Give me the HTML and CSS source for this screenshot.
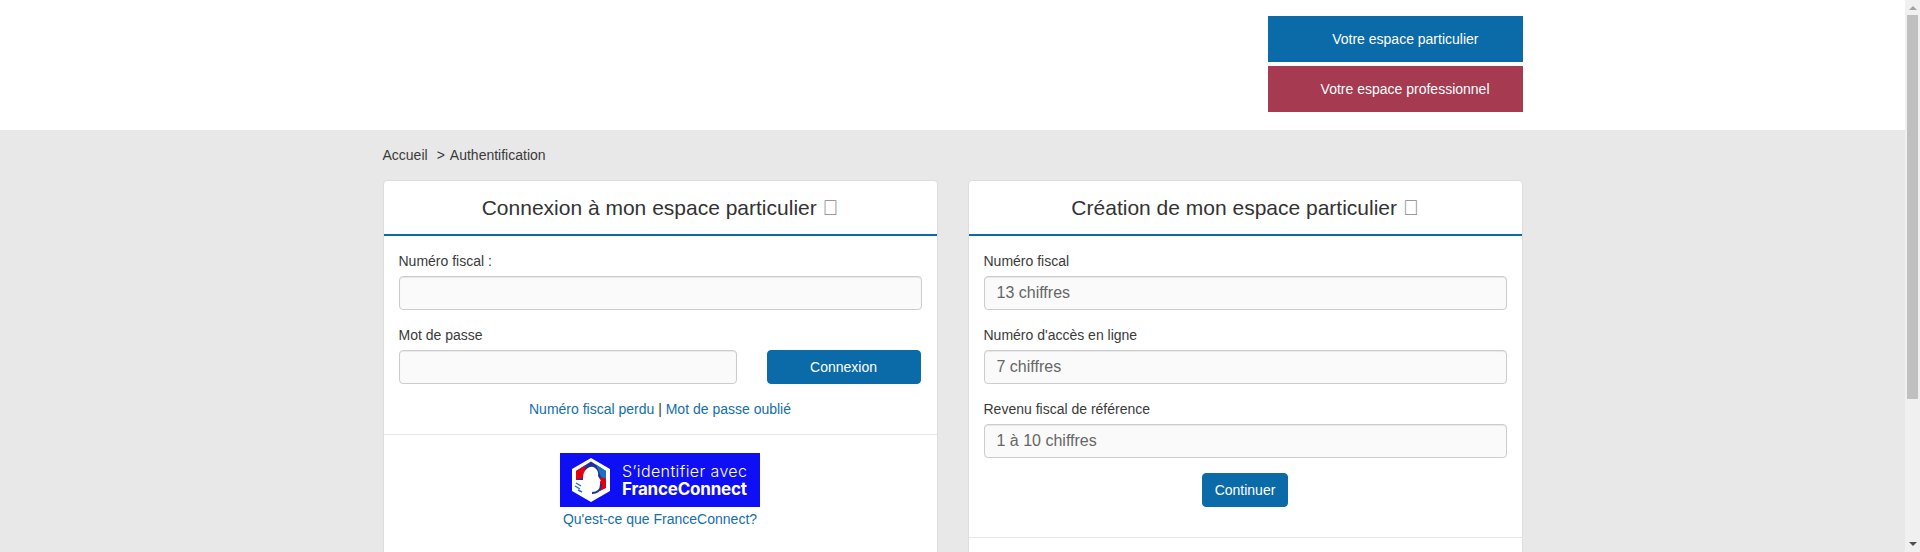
FILE: index.html
```html
<!DOCTYPE html>
<html lang="fr">

<head>
    <meta charset="utf-8">
    <title>Authentification</title>
    <link rel="stylesheet" href="styles.css">
</head>

<body>
    <div class="page">
        <div class="header">
            <div class="container header-inner">
                <div class="espaces">
                    <a class="espace espace-part" href="#">Votre espace particulier</a>
                    <a class="espace espace-pro" href="#">Votre espace professionnel</a>
                </div>
            </div>
        </div>

        <div class="container">
            <div class="breadcrumb"><span>Accueil</span><span class="sep">&gt;</span><span>Authentification</span></div>

            <div class="columns">
                <div class="card">
                    <h2 class="card-title">Connexion à mon espace particulier <span class="icon">&#xf059;</span></h2>
                    <div class="card-body">
                        <div class="field">
                            <label for="spi">Numéro fiscal :</label>
                            <input type="text" id="spi">
                        </div>
                        <div class="field">
                            <label for="pwd">Mot de passe</label>
                            <div class="pwd-row">
                                <input type="password" id="pwd">
                                <button class="btn btn-wide" type="button">Connexion</button>
                            </div>
                        </div>
                        <p class="links"><a href="#">Numéro fiscal perdu</a> | <a href="#">Mot de passe oublié</a></p>
                    </div>
                    <div class="card-section fc">
                        <svg class="fc-logo" width="200" height="54" viewBox="0 0 200 54">
                            <rect width="200" height="54" fill="#0f0ff5"/>
                            <polygon points="31,5 50,16 50,38 31,49 12,38 12,16" fill="#fff"/>
                            <polygon points="31,8.5 46,18 46,27 16,27 16,18" fill="#1b2f9e"/>
                            <polygon points="16,18 25,12.5 26,24 16,27" fill="#e1000f"/>
                            <polygon points="36,11.5 46,18 46,26 41,24" fill="#1e6fc0"/>
                            <polygon points="40,24 46,26 46,35 40,38" fill="#e1000f"/>
                            <path d="M23 25 C23 17 29 13 33 14 C37 15 39 20 38 23 L41 28 L38 29 L38 33 C37 35 35 34 33 35 L33 39 L26 42 C27 37 25 34 24 31 C23 29 23 27 23 25 Z" fill="#fff"/>
                            <path d="M32 40 C36 40 41 38 41 31" fill="none" stroke="#1b2f9e" stroke-width="2"/>
                            <path d="M16 30 L21 33 M15 33 L20 36 M18 37 L22 39" stroke="#1e6fc0" stroke-width="1.4"/>
                            <text class="fc-small" x="62" y="24" textLength="125">S’identifier avec</text>
                            <text class="fc-big" x="62" y="42" textLength="125">FranceConnect</text>
                        </svg>
                        <a class="fc-link" href="#">Qu'est-ce que FranceConnect?</a>
                    </div>
                </div>

                <div class="card">
                    <h2 class="card-title">Création de mon espace particulier <span class="icon">&#xf059;</span></h2>
                    <div class="card-body">
                        <div class="field">
                            <label for="num">Numéro fiscal</label>
                            <input type="text" id="num" placeholder="13 chiffres">
                        </div>
                        <div class="field">
                            <label for="acces">Numéro d'accès en ligne</label>
                            <input type="text" id="acces" placeholder="7 chiffres">
                        </div>
                        <div class="field">
                            <label for="rfr">Revenu fiscal de référence</label>
                            <input type="text" id="rfr" placeholder="1 à 10 chiffres">
                        </div>
                        <div class="center">
                            <button class="btn" type="button">Continuer</button>
                        </div>
                    </div>
                    <div class="card-section"></div>
                </div>
            </div>
        </div>
    </div>

    <div class="scrollbar">
        <span class="arrow arrow-up"></span>
        <div class="track"><div class="thumb"></div></div>
        <span class="arrow arrow-down"></span>
    </div>
</body>

</html>
```

FILE: styles.css
```css
* {
    box-sizing: border-box;
}

html,
body {
    height: 100%;
}

body {
    margin: 0;
    display: flex;
    overflow: hidden;
    background-color: #e8e8e8;
    color: #3a3a3a;
    font-family: "Liberation Sans", Arial, sans-serif;
    font-size: 14px;
    line-height: 20px;
}

a {
    color: #156ea8;
    text-decoration: none;
}

.page {
    flex: 1;
    height: 100%;
    overflow: hidden;
}

.container {
    width: 1170px;
    margin: 0 auto;
    padding: 0 15px;
}

.header {
    background-color: #fff;
    height: 130px;
    padding-top: 16px;
}

.header-inner {
    display: flex;
    justify-content: flex-end;
}

.espaces {
    width: 255px;
    display: flex;
    flex-direction: column;
    gap: 4px;
}

.espace {
    height: 46px;
    line-height: 46px;
    color: #fff;
    text-align: right;
}

.espace-part {
    background-color: #0b6ba8;
    padding-right: 44px;
}

.espace-pro {
    background-color: #a53a51;
    padding-right: 33px;
}

.breadcrumb {
    padding-top: 15px;
    height: 50px;
}

.sep {
    margin: 0 5px 0 9px;
}

.columns {
    display: flex;
    gap: 30px;
}

.card {
    width: 555px;
    height: 400px;
    background-color: #fff;
    border: 1px solid #ddd;
    border-radius: 4px;
}

.card-title {
    margin: 0;
    height: 55px;
    border-bottom: 2px solid #0b6ba8;
    font-size: 21px;
    font-weight: normal;
    line-height: 54px;
    text-align: center;
    color: #333;
}

.icon {
    color: #888;
}

.card-body {
    padding: 15px 15px 0;
}

.field {
    margin-bottom: 15px;
}

.field label {
    display: block;
    margin-bottom: 5px;
}

.field input {
    display: block;
    width: 100%;
    height: 34px;
    padding: 6px 12px;
    background-color: #fafafa;
    border: 1px solid #ccc;
    border-radius: 4px;
    box-shadow: inset 0 1px 1px rgba(0, 0, 0, .075);
    color: #555;
    font-family: inherit;
    font-size: 16px;
}

.field input::placeholder {
    color: #666;
    opacity: 1;
}

.pwd-row {
    display: flex;
    justify-content: space-between;
}

.pwd-row input {
    width: 338px;
}

.btn {
    height: 34px;
    padding: 6px 12px;
    background-color: #0b6ba8;
    border: 1px solid #0b6ba8;
    border-radius: 4px;
    color: #fff;
    font-family: inherit;
    font-size: 14px;
}

.btn-wide {
    width: 154px;
    margin-right: 1px;
}

.links {
    margin: 0;
    text-align: center;
    padding-bottom: 15px;
}

.card-section {
    border-top: 1px solid #e6e6e6;
}

.fc {
    padding-top: 18px;
    text-align: center;
}

.fc-logo {
    display: block;
    margin: 0 auto;
}

.fc-link {
    display: block;
    margin-top: 2px;
}

.fc-small {
    fill: #fff;
    font-family: Inter, sans-serif;
    font-size: 16px;
    font-weight: 300;
}

.fc-big {
    fill: #fff;
    font-family: Inter, sans-serif;
    font-size: 17px;
    font-weight: 700;
}

.center {
    text-align: center;
    margin-bottom: 30px;
}

.scrollbar {
    width: 15px;
    height: 100%;
    flex: none;
    display: flex;
    flex-direction: column;
    align-items: center;
    background-color: #f0f0f0;
}

.arrow {
    flex: none;
    width: 0;
    height: 0;
    border-left: 4px solid transparent;
    border-right: 4px solid transparent;
}

.arrow-up {
    border-bottom: 4px solid #a3a3a3;
    margin: 6px 0 5px;
}

.arrow-down {
    border-top: 4px solid #505050;
    margin: 5px 0 6px;
}

.track {
    flex: 1;
    width: 100%;
    padding: 0 2px;
}

.thumb {
    height: 384px;
    background-color: #c0c0c0;
}
```
